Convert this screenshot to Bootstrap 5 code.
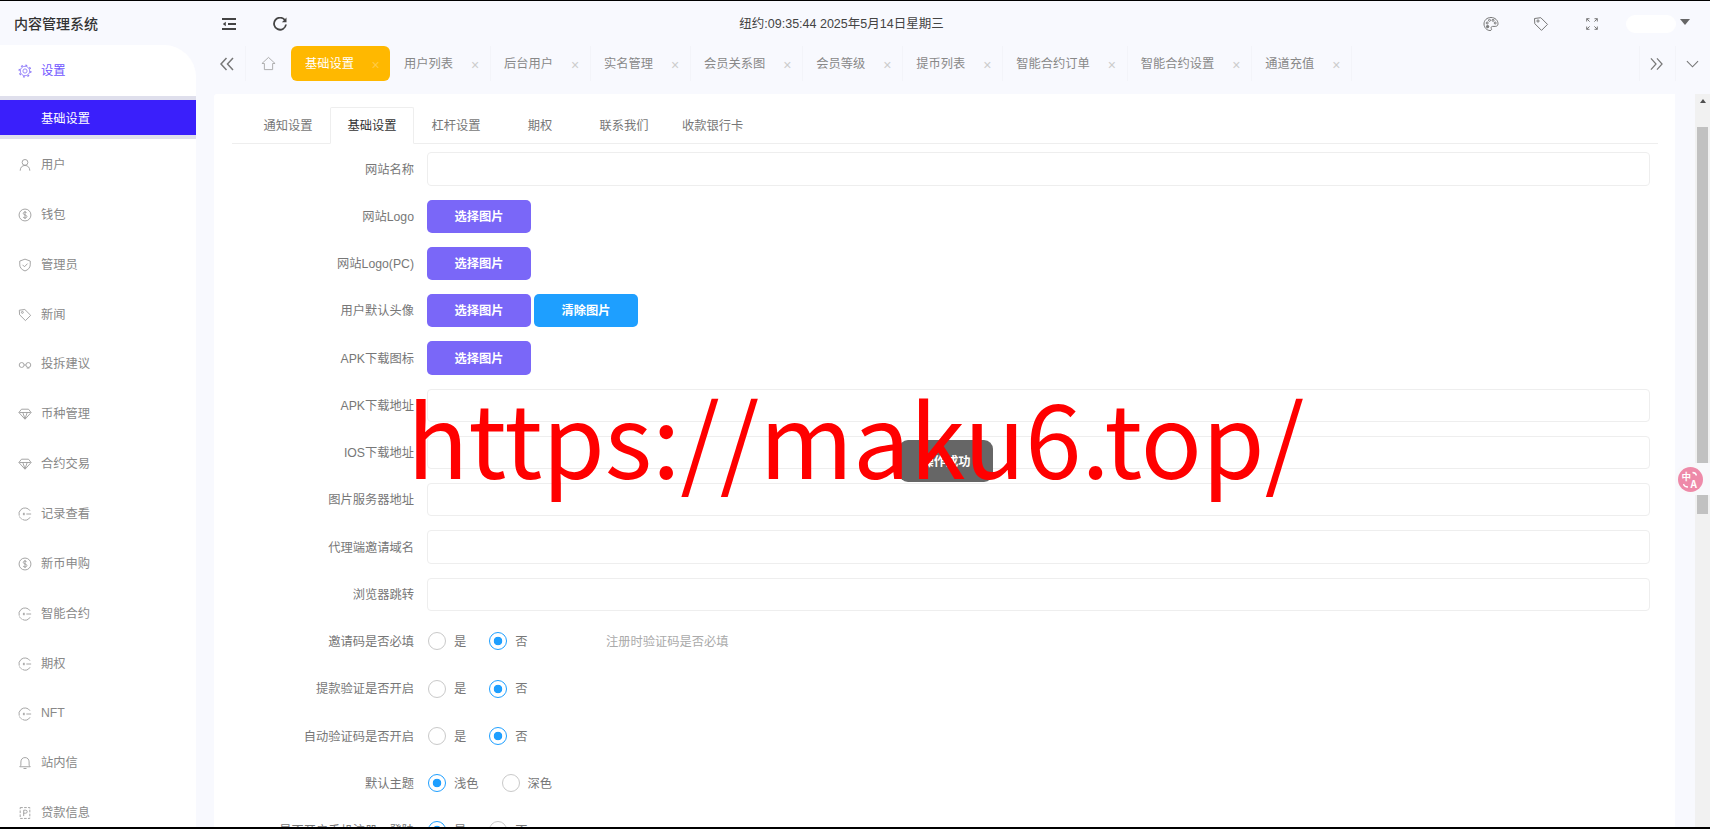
<!DOCTYPE html>
<html lang="zh-CN">
<head>
    <meta charset="UTF-8">
    <meta name="viewport" content="width=device-width, initial-scale=1.0">
    <title>内容管理系统</title>
    <link href="https://cdn.jsdelivr.net/npm/bootstrap@5.3.0/dist/css/bootstrap.min.css" rel="stylesheet">
    <style>
        html, body { height: 100%; overflow: hidden; }
        body { font-family: "Liberation Sans", "Noto Sans CJK SC", sans-serif; font-size: 12.25px; color: #777; background: #f8f9fe; }
        .app-shell { height: 100vh; border-top: 1px solid #000; border-bottom: 2px solid #000; position: relative; overflow: hidden; }
        svg { display: block; flex: none; fill: none; stroke: currentColor; }

        /* top bar */
        .top-bar { height: 44px; padding-top: 2px; flex: none; }
        .top-left { width: 300px; }
        .brand-name { width: 196px; padding-left: 14px; font-size: 14px; font-weight: 500; color: #333; }
        .top-tool { color: #444; }
        .tool-indent { margin-left: 26px; }
        .tool-refresh { margin-left: 37px; }
        .clock-text { width: 1083px; color: #444; font-size: 12.5px; }
        .top-right { color: #777; }
        .tool-palette { margin-left: 100px; }
        .tool-tag { margin-left: 34px; }
        .tool-full { margin-left: 37px; }
        .user-pill { width: 50px; height: 18px; margin-left: 28px; background: #fff; border-radius: 9px; }
        .user-caret { margin-left: 4px; margin-top: -4px; width: 0; height: 0; border-left: 5px solid transparent; border-right: 5px solid transparent; border-top: 6px solid #666; }

        /* sidebar */
        .side-menu { width: 196px; background: #fff; border-top-right-radius: 32px; overflow: hidden; flex: none; }
        .side-item { height: 49.85px; padding-left: 18px; padding-top: 3px; gap: 9px; color: #888; flex: none; }
        .side-item svg { color: #999; }
        .side-open { color: #6f55ff; margin-bottom: 1px; }
        .side-open svg { color: #8f7cf8; }
        .side-sub { height: 43px; border-top: 4px solid #dfdfec; border-bottom: 4px solid #dfdfec; background: #3a1ffb; color: #fff; padding-left: 41px; padding-top: 4px; flex: none; }

        /* tab strip */
        .tab-strip { height: 49px; flex: none; }
        .strip-btn { height: 35px; margin-top: 1px; color: #777; flex: none; }
        .strip-prev { width: 50px; padding-left: 24px; padding-top: 1px; border-right: 1px solid #f3f4f9; }
        .strip-home { width: 45px; justify-content: center; color: #aaa; }
        .page-tab { height: 35px; margin-top: 1px; padding-left: 13px; padding-right: 10px; padding-top: 2px; border-right: 1px solid #f3f4f9; color: #888; white-space: nowrap; }
        .page-tab-on { width: 99px; padding-left: 14px; padding-right: 10px; margin-right: 1px; background: #ffb800; color: #fff; border: 0; border-radius: 6px; }
        .tab-x { width: 10px; margin-left: 17px; color: #ccc; font-size: 14px; line-height: 1; text-align: center; }
        .page-tab-on .tab-x { margin-left: 17px; color: #ffcb45; }
        .strip-next { width: 36px; margin-left: auto; justify-content: center; padding-right: 2px; border-left: 1px solid #f3f4f9; }
        .strip-down { width: 35px; justify-content: center; padding-right: 2px; border-left: 1px solid #f3f4f9; }

        /* content */
        .work-row { min-height: 0; }
        .form-card { width: 1461px; margin-left: 18px; padding-top: 13px; background: #fff; overflow: hidden; border-top-left-radius: 3px; }
        .form-tabs { margin-left: 18px; margin-right: 17px; padding-left: 14px; border-bottom: 1px solid #eee; height: 37px; }
        .form-tabs .nav-link { min-width: 84px; height: 37px; padding: 0 15px; line-height: 36px; text-align: center; color: #777; border: 1px solid transparent; border-radius: 2px 2px 0 0; margin-bottom: -1px; font-size: 12.25px; }
        .form-tabs .nav-link.active { color: #333; border-color: #eee #eee #fff; background: #fff; }
        .form-list { padding-top: 8.3px; padding-right: 25px; gap: 14px; }
        .form-line { height: 33.25px; flex: none; }
        .line-label { width: 200px; padding-top: 2px; text-align: right; color: #777; flex: none; white-space: nowrap; }
        .line-body { margin-left: 13px; flex-grow: 1; }
        .line-body .form-control { height: 33.25px; border: 1px solid #eee; border-radius: 4px; box-shadow: none; }
        .pick-btn { width: 104px; height: 33.25px; padding: 2px 0 0; border: 0; border-radius: 5px; color: #fff; font-size: 12.25px; font-weight: 700; }
        .pick-purple, .pick-purple:hover { background: #7a67f8; color: #fff; }
        .pick-blue, .pick-blue:hover { background: #1e9fff; color: #fff; margin-left: 3px; }
        .radio-item { min-height: 0; margin: 0 23px 0 0; padding: 0; gap: 8px; color: #777; }
        .radio-item .form-check-input { float: none; width: 18px; height: 18px; margin: 0; border: 1.5px solid #c9c9c9; background-color: #fff; box-shadow: none; }
        .radio-item .form-check-input:checked { border-color: #1e9fff; background-color: #fff; background-image: radial-gradient(circle, #1e9fff 0, #1e9fff 4px, #fff 4.6px); }
        .radio-item .form-check-label { padding-top: 2px; }
        .radio-group { padding-left: 1px; }
        .radio-fixed { width: 178px; flex: none; }
        .line-hint { color: #aaa; padding-top: 1px; }

        /* scrollbar */
        .fake-scroll { width: 15px; margin-left: 20px; background: #f1f1f1; flex: none; overflow: hidden; }
        .scroll-up { height: 16px; padding-top: 5px; }
        .scroll-arrow { width: 0; height: 0; margin: 0 auto; border-left: 3.5px solid transparent; border-right: 3.5px solid transparent; border-bottom: 4px solid #505050; }
        .scroll-thumb { height: 387px; margin: 17px 2px 0; background: #c1c1c1; }

        /* overlays */
        .lang-pill { position: absolute; right: 0; top: 462px; width: 35px; height: 32px; padding-left: 3px; background: #f8f8fb; border-radius: 16px 0 0 16px; }
        .lang-dot { width: 25px; height: 25px; background: #ee8aa9; border-radius: 50%; }
        .lang-dot text { fill: #fff; stroke: none; font-family: "Noto Sans CJK SC", sans-serif; font-weight: 700; }
        .toast-box { position: absolute; left: 899px; top: 439px; width: 94px; height: 42px; padding-top: 2px; background: #666; border-radius: 9px; color: #fff; font-weight: 700; }
        .water-mark { position: absolute; left: 407px; top: 384px; font-family: "Noto Sans CJK SC", sans-serif; font-size: 101px; line-height: 1; color: #f00; white-space: nowrap; pointer-events: none; }
    </style>
</head>
<body>
<svg width="0" height="0" class="position-absolute">
    <symbol id="i-gear" viewBox="0 0 16 16"><circle cx="8" cy="8" r="5.4"/><circle cx="8" cy="8" r="6.7" stroke-width="1.5" stroke-dasharray="2.2 3"/><circle cx="8" cy="8" r="2.4"/></symbol>
    <symbol id="i-user" viewBox="0 0 16 16"><circle cx="8" cy="5" r="3.3"/><path d="M2.5 14.5c0-3.6 2.2-6 5.5-6s5.500 2.400 5.500 6"/></symbol>
    <symbol id="i-coin" viewBox="0 0 16 16"><circle cx="8" cy="8" r="6.800"/><path d="M10 5.800C9.500 4.900 8.800 4.600 8 4.600c-1.200 0-2 .6-2 1.600 0 2.200 4.200 1.300 4.200 3.600 0 1-.9 1.600-2.200 1.600-1 0-1.800-.4-2.300-1.200M8 3.400v9.200"/></symbol>
    <symbol id="i-shield" viewBox="0 0 16 16"><path d="M8 1.300 14 3.500v4.300c0 3.300-2.500 5.800-6 7-3.500-1.200-6-3.700-6-7V3.500z"/><path d="M5.200 7.800 7.400 10l3.500-3.600"/></symbol>
    <symbol id="i-tag" viewBox="0 0 16 16"><path d="M1.500 2.500 7.800 1.700l6.700 6.700-6 6-6.700-6.700z"/><circle cx="5" cy="5" r="1.100"/></symbol>
    <symbol id="i-link" viewBox="0 0 16 16"><circle cx="4.200" cy="8" r="2.800"/><circle cx="11.800" cy="8" r="2.800"/><path d="M7 8h2M10 11.500h3"/></symbol>
    <symbol id="i-gem" viewBox="0 0 16 16"><path d="M4 2.500h8l3 3.800L8 14 1 6.300z"/><path d="M1.500 6.300h13M5.500 6.300 8 13.500l2.500-7.200"/></symbol>
    <symbol id="i-swap" viewBox="0 0 16 16"><path d="M13.800 4.300A6.900 6.900 0 1 0 13.800 11.700" stroke-dasharray="19 1 4 1 14"/><path d="M5.500 8h1.800M9.500 8H15"/><path d="M6.800 6.500v3" stroke-width="1.300"/></symbol>
    <symbol id="i-bell" viewBox="0 0 16 16"><path d="M8 1.800c-2.900 0-4.700 2.100-4.700 5v3.800L2 12.300h12l-1.300-1.700V6.800c0-2.900-1.800-5-4.700-5z"/><path d="M6.300 14.300h3.400"/></symbol>
    <symbol id="i-doc" viewBox="0 0 16 16"><path d="M2.500 1.800h11v12.400h-11z" stroke-dasharray="3 1.500"/><path d="M6.500 11.500V4.800h2.300a1.600 1.600 0 0 1 0 3.400H6.500"/></symbol>
    <symbol id="i-indent" viewBox="0 0 14 12"><path d="M0 1h14M6 6h8M0 11h14" stroke-width="1.800"/><path d="M3.800 3.800.8 6l3 2.200z" fill="currentColor" stroke="none"/></symbol>
    <symbol id="i-refresh" viewBox="0 0 14 14"><path d="M12 3.300A6 6 0 1 0 13 7.500" stroke-width="1.800"/><path d="M13.500.600v4.600H8.900z" fill="currentColor" stroke="none"/></symbol>
    <symbol id="i-palette" viewBox="0 0 16 16"><path d="M8 1.500C3.800 1.500 1 4.300 1 8s3 6.500 6 6.500c1.700 0 1.800-1.200 1.300-2-.6-1 .1-2.100 1.200-2.100h2.700c1.800 0 2.800-1 2.800-2.600 0-3.500-3-6.300-7-6.300z"/><circle cx="4.200" cy="7" r="1"/><circle cx="6.500" cy="4.300" r="1"/><circle cx="10" cy="4.300" r="1"/><circle cx="12.200" cy="7" r="1"/><circle cx="4.600" cy="10.600" r="1.200" fill="currentColor"/></symbol>
    <symbol id="i-full" viewBox="0 0 12 12"><path d="M.7 3.500V.7h2.800M.7.700 3.600 3.600M8.500.7h2.800v2.800M11.300.7 8.400 3.600M.7 8.500v2.800h2.800M.7 11.300l2.900-2.900M11.300 8.500v2.800H8.500M11.300 11.300 8.400 8.400"/></symbol>
    <symbol id="i-home" viewBox="0 0 16 16"><path d="M8 1.500 15 8h-2.600v6.500H3.600V8H1z"/></symbol>
    <symbol id="i-left2" viewBox="0 0 14 14"><path d="M6.500 1 1 7l5.500 6M13 1 7.500 7l5.500 6" stroke-width="1.500"/></symbol>
    <symbol id="i-right2" viewBox="0 0 14 14"><path d="M1 1l5.500 6L1 13M7.500 1 13 7l-5.500 6" stroke-width="1.300"/></symbol>
    <symbol id="i-down" viewBox="0 0 14 8"><path d="M1 1l6 6 6-6" stroke-width="1.200"/></symbol>
</svg>

<div class="app-shell d-flex flex-column">
    <header class="top-bar d-flex align-items-center">
        <div class="top-left d-flex align-items-center">
            <div class="brand-name">内容管理系统</div>
            <svg class="top-tool tool-indent" width="14" height="12"><use href="#i-indent"/></svg>
            <svg class="top-tool tool-refresh" width="14" height="14"><use href="#i-refresh"/></svg>
        </div>
        <div class="clock-text text-center">纽约:09:35:44 2025年5月14日星期三</div>
        <div class="top-right d-flex align-items-center">
            <svg class="tool-palette" width="16" height="16"><use href="#i-palette"/></svg>
            <svg class="tool-tag" width="16" height="16"><use href="#i-tag"/></svg>
            <svg class="tool-full" width="12" height="12"><use href="#i-full"/></svg>
            <div class="user-pill"></div>
            <div class="user-caret"></div>
        </div>
    </header>

    <div class="d-flex flex-grow-1 work-row">
        <nav class="side-menu d-flex flex-column">
            <div class="side-item side-open d-flex align-items-center"><svg width="14" height="14"><use href="#i-gear"/></svg>设置</div>
            <div class="side-sub d-flex align-items-center">基础设置</div>
            <div class="side-item d-flex align-items-center"><svg width="14" height="14"><use href="#i-user"/></svg>用户</div>
            <div class="side-item d-flex align-items-center"><svg width="14" height="14"><use href="#i-coin"/></svg>钱包</div>
            <div class="side-item d-flex align-items-center"><svg width="14" height="14"><use href="#i-shield"/></svg>管理员</div>
            <div class="side-item d-flex align-items-center"><svg width="14" height="14"><use href="#i-tag"/></svg>新闻</div>
            <div class="side-item d-flex align-items-center"><svg width="14" height="14"><use href="#i-link"/></svg>投拆建议</div>
            <div class="side-item d-flex align-items-center"><svg width="14" height="14"><use href="#i-gem"/></svg>币种管理</div>
            <div class="side-item d-flex align-items-center"><svg width="14" height="14"><use href="#i-gem"/></svg>合约交易</div>
            <div class="side-item d-flex align-items-center"><svg width="14" height="14"><use href="#i-swap"/></svg>记录查看</div>
            <div class="side-item d-flex align-items-center"><svg width="14" height="14"><use href="#i-coin"/></svg>新币申购</div>
            <div class="side-item d-flex align-items-center"><svg width="14" height="14"><use href="#i-swap"/></svg>智能合约</div>
            <div class="side-item d-flex align-items-center"><svg width="14" height="14"><use href="#i-swap"/></svg>期权</div>
            <div class="side-item d-flex align-items-center"><svg width="14" height="14"><use href="#i-swap"/></svg>NFT</div>
            <div class="side-item d-flex align-items-center"><svg width="14" height="14"><use href="#i-bell"/></svg>站内信</div>
            <div class="side-item d-flex align-items-center"><svg width="14" height="14"><use href="#i-doc"/></svg>贷款信息</div>
        </nav>

        <main class="d-flex flex-column flex-grow-1 work-row">
            <div class="tab-strip d-flex">
                <div class="strip-btn strip-prev d-flex align-items-center"><svg width="14" height="14"><use href="#i-left2"/></svg></div>
                <div class="strip-btn strip-home d-flex align-items-center"><svg width="15" height="15"><use href="#i-home"/></svg></div>
                <div class="page-tab page-tab-on d-flex align-items-center">基础设置<span class="tab-x">×</span></div>
                <div class="page-tab d-flex align-items-center">用户列表<span class="tab-x">×</span></div>
                <div class="page-tab d-flex align-items-center">后台用户<span class="tab-x">×</span></div>
                <div class="page-tab d-flex align-items-center">实名管理<span class="tab-x">×</span></div>
                <div class="page-tab d-flex align-items-center">会员关系图<span class="tab-x">×</span></div>
                <div class="page-tab d-flex align-items-center">会员等级<span class="tab-x">×</span></div>
                <div class="page-tab d-flex align-items-center">提币列表<span class="tab-x">×</span></div>
                <div class="page-tab d-flex align-items-center">智能合约订单<span class="tab-x">×</span></div>
                <div class="page-tab d-flex align-items-center">智能合约设置<span class="tab-x">×</span></div>
                <div class="page-tab d-flex align-items-center">通道充值<span class="tab-x">×</span></div>
                <div class="strip-btn strip-next d-flex align-items-center"><svg width="13" height="14"><use href="#i-right2"/></svg></div>
                <div class="strip-btn strip-down d-flex align-items-center"><svg width="13" height="8"><use href="#i-down"/></svg></div>
            </div>

            <div class="d-flex flex-grow-1 work-row">
                <section class="form-card">
                    <ul class="nav nav-tabs form-tabs">
                        <li class="nav-item"><a class="nav-link" href="#">通知设置</a></li>
                        <li class="nav-item"><a class="nav-link active" href="#">基础设置</a></li>
                        <li class="nav-item"><a class="nav-link" href="#">杠杆设置</a></li>
                        <li class="nav-item"><a class="nav-link" href="#">期权</a></li>
                        <li class="nav-item"><a class="nav-link" href="#">联系我们</a></li>
                        <li class="nav-item"><a class="nav-link" href="#">收款银行卡</a></li>
                    </ul>
                    <form class="form-list d-flex flex-column">
                        <div class="form-line d-flex align-items-center"><label class="line-label">网站名称</label><div class="line-body"><input type="text" class="form-control"></div></div>
                        <div class="form-line d-flex align-items-center"><label class="line-label">网站Logo</label><div class="line-body d-flex"><button type="button" class="btn pick-btn pick-purple">选择图片</button></div></div>
                        <div class="form-line d-flex align-items-center"><label class="line-label">网站Logo(PC)</label><div class="line-body d-flex"><button type="button" class="btn pick-btn pick-purple">选择图片</button></div></div>
                        <div class="form-line d-flex align-items-center"><label class="line-label">用户默认头像</label><div class="line-body d-flex"><button type="button" class="btn pick-btn pick-purple">选择图片</button><button type="button" class="btn pick-btn pick-blue">清除图片</button></div></div>
                        <div class="form-line d-flex align-items-center"><label class="line-label">APK下载图标</label><div class="line-body d-flex"><button type="button" class="btn pick-btn pick-purple">选择图片</button></div></div>
                        <div class="form-line d-flex align-items-center"><label class="line-label">APK下载地址</label><div class="line-body"><input type="text" class="form-control"></div></div>
                        <div class="form-line d-flex align-items-center"><label class="line-label">IOS下载地址</label><div class="line-body"><input type="text" class="form-control"></div></div>
                        <div class="form-line d-flex align-items-center"><label class="line-label">图片服务器地址</label><div class="line-body"><input type="text" class="form-control"></div></div>
                        <div class="form-line d-flex align-items-center"><label class="line-label">代理端邀请域名</label><div class="line-body"><input type="text" class="form-control"></div></div>
                        <div class="form-line d-flex align-items-center"><label class="line-label">浏览器跳转</label><div class="line-body"><input type="text" class="form-control"></div></div>
                        <div class="form-line d-flex align-items-center"><label class="line-label">邀请码是否必填</label><div class="line-body radio-group d-flex align-items-center">
                            <div class="radio-fixed d-flex">
                                <div class="form-check radio-item d-flex align-items-center"><input class="form-check-input" type="radio" name="r1"><label class="form-check-label">是</label></div>
                                <div class="form-check radio-item d-flex align-items-center"><input class="form-check-input" type="radio" name="r1" checked><label class="form-check-label">否</label></div>
                            </div>
                            <span class="line-hint">注册时验证码是否必填</span>
                        </div></div>
                        <div class="form-line d-flex align-items-center"><label class="line-label">提款验证是否开启</label><div class="line-body radio-group d-flex align-items-center">
                            <div class="form-check radio-item d-flex align-items-center"><input class="form-check-input" type="radio" name="r2"><label class="form-check-label">是</label></div>
                            <div class="form-check radio-item d-flex align-items-center"><input class="form-check-input" type="radio" name="r2" checked><label class="form-check-label">否</label></div>
                        </div></div>
                        <div class="form-line d-flex align-items-center"><label class="line-label">自动验证码是否开启</label><div class="line-body radio-group d-flex align-items-center">
                            <div class="form-check radio-item d-flex align-items-center"><input class="form-check-input" type="radio" name="r3"><label class="form-check-label">是</label></div>
                            <div class="form-check radio-item d-flex align-items-center"><input class="form-check-input" type="radio" name="r3" checked><label class="form-check-label">否</label></div>
                        </div></div>
                        <div class="form-line d-flex align-items-center"><label class="line-label">默认主题</label><div class="line-body radio-group d-flex align-items-center">
                            <div class="form-check radio-item d-flex align-items-center"><input class="form-check-input" type="radio" name="r4" checked><label class="form-check-label">浅色</label></div>
                            <div class="form-check radio-item d-flex align-items-center"><input class="form-check-input" type="radio" name="r4"><label class="form-check-label">深色</label></div>
                        </div></div>
                        <div class="form-line d-flex align-items-center"><label class="line-label">是否开启手机注册、登陆</label><div class="line-body radio-group d-flex align-items-center">
                            <div class="form-check radio-item d-flex align-items-center"><input class="form-check-input" type="radio" name="r5" checked><label class="form-check-label">是</label></div>
                            <div class="form-check radio-item d-flex align-items-center"><input class="form-check-input" type="radio" name="r5"><label class="form-check-label">否</label></div>
                        </div></div>
                    </form>
                </section>
                <div class="fake-scroll">
                    <div class="scroll-up"><div class="scroll-arrow"></div></div>
                    <div class="scroll-thumb"></div>
                </div>
            </div>
        </main>
    </div>

    <div class="toast-box d-flex align-items-center justify-content-center">操作成功</div>
    <div class="lang-pill d-flex align-items-center">
        <svg class="lang-dot" width="25" height="25" viewBox="0 0 25 25">
            <text x="3.500" y="13" font-size="9.500">中</text>
            <text x="12.500" y="21" font-size="10">A</text>
            <path d="M14.500 5.500c2 0 3.500 1 4 3M10 20c-2.500 0-4-1-4.500-3" stroke="#fff" stroke-width="1.300"/>
        </svg>
    </div>
    <div class="water-mark">https://maku6.top/</div>
</div>

<script src="https://cdn.jsdelivr.net/npm/bootstrap@5.3.0/dist/js/bootstrap.bundle.min.js"></script>
</body>
</html>
